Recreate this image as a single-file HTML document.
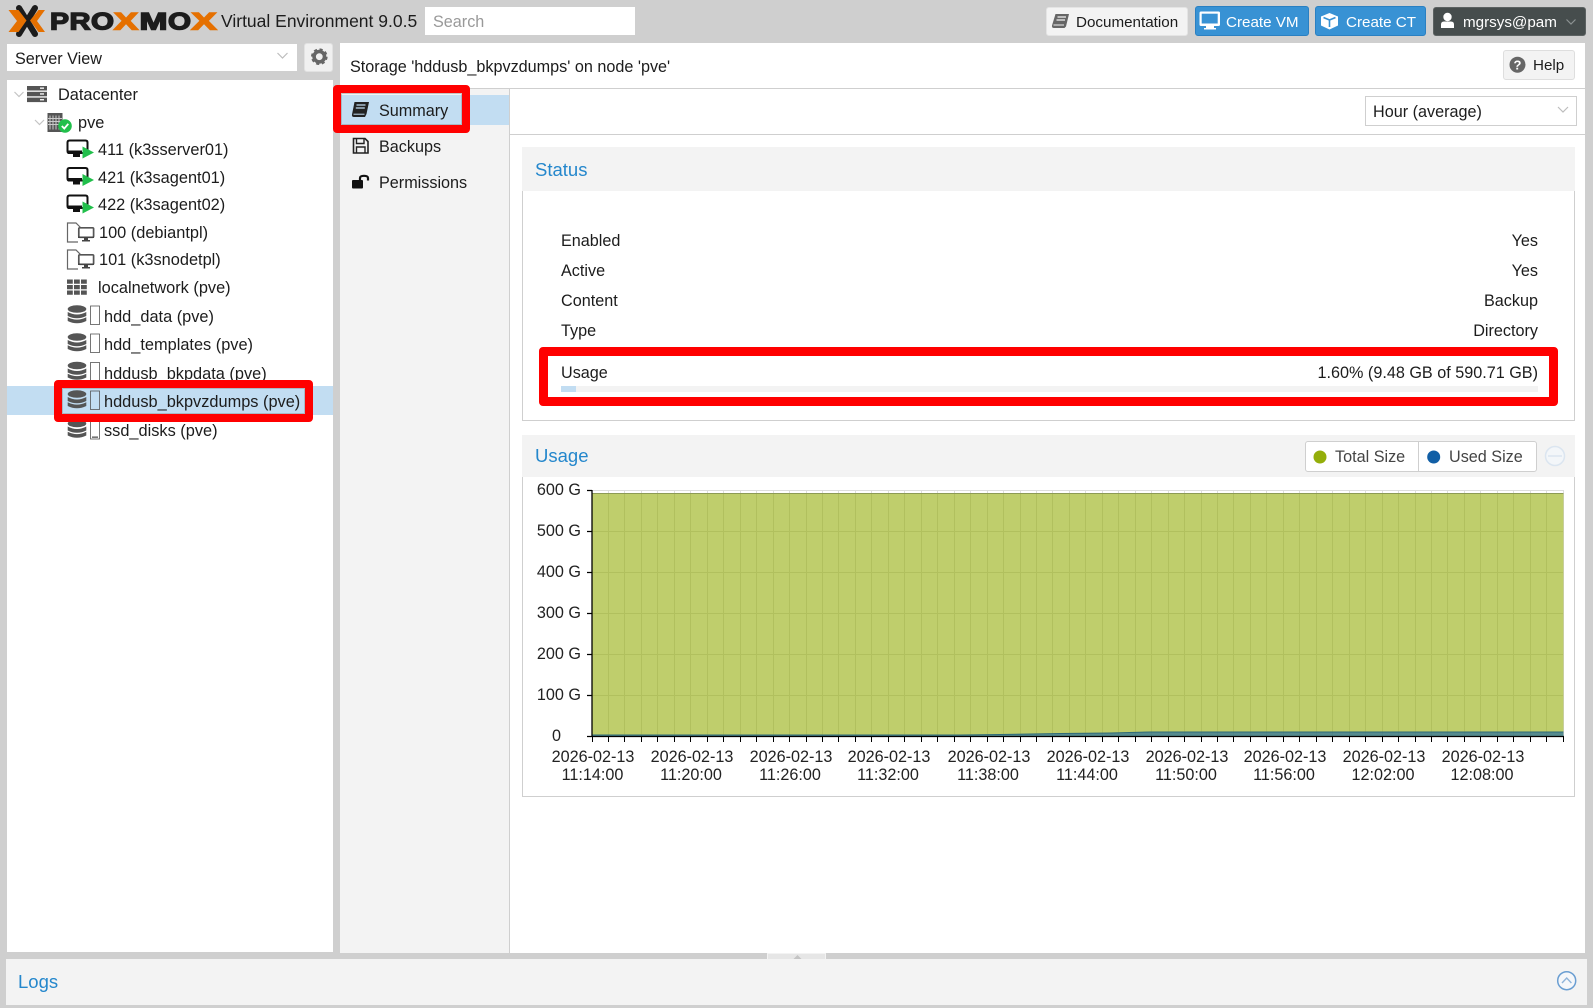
<!DOCTYPE html>
<html><head><meta charset="utf-8"><style>
html,body{margin:0;padding:0}
body{width:1593px;height:1008px;overflow:hidden;position:relative;background:#cfcfcf;font:16.2px/20px "Liberation Sans",sans-serif;color:#1c1c1c}
.a,.t{position:absolute}
.t{white-space:nowrap;height:20px}
.w{color:#fff}
.k{font-size:15.2px}
.tr{font-size:16.35px}
.b{color:#2487cc;font-size:18.5px}
.red{position:absolute;box-sizing:border-box;border:8.5px solid #f00;border-radius:4px;box-shadow:inset 0 0 0 1px rgba(140,140,140,.45)}
svg{position:absolute;overflow:visible}
</style></head><body>

<svg style="left:0;top:0" width="225" height="42" viewBox="0 0 225 42">
<g stroke="#1c1c1c" stroke-width="6" stroke-linecap="round" fill="none"><path d="M19 8L35 34"/><path d="M35 8L19 34"/></g>
<g fill="#e57000"><path d="M8.500 10H18.500L26.500 20.500 18.500 32H8.500L17 21z"/><path d="M45 10H38.500L30 20.500 38.500 32H45L37 21z"/></g>
<g font-family="Liberation Sans" font-weight="700" font-size="24" stroke-width="1.400">
<text x="50" y="29.700" textLength="19" lengthAdjust="spacingAndGlyphs" fill="#1c1c1c" stroke="#1c1c1c">P</text>
<text x="69.500" y="29.700" textLength="21" lengthAdjust="spacingAndGlyphs" fill="#1c1c1c" stroke="#1c1c1c">R</text>
<text x="91" y="29.700" textLength="23" lengthAdjust="spacingAndGlyphs" fill="#1c1c1c" stroke="#1c1c1c">O</text>
<text x="114" y="29.700" textLength="24" lengthAdjust="spacingAndGlyphs" fill="#e57000" stroke="#e57000">X</text>
<text x="139.500" y="29.700" textLength="28" lengthAdjust="spacingAndGlyphs" fill="#1c1c1c" stroke="#1c1c1c">M</text>
<text x="168" y="29.700" textLength="23" lengthAdjust="spacingAndGlyphs" fill="#1c1c1c" stroke="#1c1c1c">O</text>
<text x="191.500" y="29.700" textLength="25" lengthAdjust="spacingAndGlyphs" fill="#e57000" stroke="#e57000">X</text>
</g></svg>
<div class="t" style="left:221px;top:11px;font-size:17.5px">Virtual Environment 9.0.5</div>
<div class="a" style="left:425px;top:7px;width:210px;height:28px;background:#fff"></div>
<div class="t" style="left:433px;top:12px;color:#999">Search</div>

<div class="a" style="left:1046px;top:7px;width:140px;height:27px;background:#f3f3f3;border:1px solid #e4e4e4;border-radius:3px"></div>
<div class="t k" style="left:1076px;top:12.500px">Documentation</div>
<div class="a" style="left:1195px;top:6px;width:112px;height:28px;background:#3892d4;border:1px solid #2a80c2;border-radius:3px"></div>
<div class="t w k" style="left:1226px;top:12.500px">Create VM</div>
<div class="a" style="left:1315px;top:6px;width:109px;height:28px;background:#3892d4;border:1px solid #2a80c2;border-radius:3px"></div>
<div class="t w k" style="left:1346px;top:12.500px">Create CT</div>
<div class="a" style="left:1433px;top:7px;width:151px;height:27px;background:#464d4d;border:1px solid #5c6262;border-radius:3px"></div>
<div class="t w k" style="left:1463px;top:12.500px">mgrsys@pam</div>

<svg style="left:0;top:0" width="1593" height="40" viewBox="0 0 1593 40">
<path d="M1055.500 14H1069L1066 26.500 1064.500 28H1054Q1051.500 28 1052 25.500z" fill="#666"/><path d="M1057.500 17H1066M1056.500 20H1065" stroke="#f3f3f3" stroke-width="1.300"/><path d="M1053.500 25H1064" stroke="#f3f3f3" stroke-width="1"/>
<path d="M1201 11.500H1218.500Q1220 11.500 1220 13V24.500Q1220 26 1218.500 26H1201Q1199.500 26 1199.500 24.500V13Q1199.500 11.500 1201 11.500z" fill="#fff"/><rect x="1201.700" y="13.700" width="16" height="9.800" fill="#3892d4"/><path d="M1206 26H1214V28H1216V29.500H1204V28H1206z" fill="#fff"/>
<path d="M1329.500 13L1338 16.500V25.500L1329.500 29.500 1321 25.500V16.500z" fill="#fff"/><path d="M1323.500 17.500L1329.500 20 1335.500 17.500M1329.500 20V27" stroke="#3892d4" stroke-width="1.600" fill="none"/>
<circle cx="1447.500" cy="17" r="4.200" fill="#fff"/><path d="M1441 28V24.500Q1441 21.500 1444 21.500H1451Q1454 21.500 1454 24.500V28z" fill="#fff"/>
<path d="M1566.500 19.500L1571 24 1575.500 19.500" fill="none" stroke="#8c9292" stroke-width="1.200"/>
</svg>

<div class="a" style="left:7px;top:44px;width:290px;height:27px;background:#fff"></div>
<div class="t" style="left:15px;top:48.500px">Server View</div>
<svg style="left:0;top:40px" width="340" height="35" viewBox="0 40 340 35"><path d="M277.500 53L282.500 58 287.500 53" fill="none" stroke="#bdbdbd" stroke-width="1.200"/></svg>
<div class="a" style="left:304px;top:43px;background:#f0f0f0;border:1px solid #e2e2e2;border-radius:3px;width:27px;height:27px"></div>
<svg style="left:309px;top:47px" width="20" height="20" viewBox="0 0 20 20"><circle cx="10.300" cy="9.700" r="5.200" fill="none" stroke="#666" stroke-width="3.600"/><circle cx="10.300" cy="9.700" r="7" fill="none" stroke="#666" stroke-width="2.600" stroke-dasharray="3 2.500"/></svg>

<div class="a" style="left:7px;top:80px;width:326px;height:872px;background:#fff"></div>
<div class="a" style="left:7px;top:386px;width:326px;height:29px;background:#c2ddf2"></div>
<div class="a" style="left:340px;top:43px;width:1245px;height:910px;background:#fff"></div>
<div class="a" style="left:340px;top:88px;width:1245px;height:1px;background:#cfcfcf"></div>
<div class="a" style="left:340px;top:89px;width:169px;height:864px;background:#f3f3f3;border-right:1px solid #cfcfcf"></div>
<div class="a" style="left:510px;top:134px;width:1075px;height:1px;background:#cfcfcf"></div>
<div class="a" style="left:341px;top:95px;width:168px;height:30px;background:#c2ddf2"></div>

<svg style="left:0;top:0" width="340" height="450" viewBox="0 0 340 450">
<g fill="none" stroke="#c4c4c4" stroke-width="1.200"><path d="M14.500 92L19 96.500 23.500 92"/><path d="M35 120L39.500 124.500 44 120"/></g>
<g fill="#555"><rect x="27" y="86" width="20" height="4.500"/><rect x="27" y="91.800" width="20" height="4.500"/><rect x="27" y="97.600" width="20" height="4.500"/></g>
<g fill="#fff"><rect x="40" y="87.500" width="4" height="1.300"/><rect x="40" y="93.300" width="4" height="1.300"/><rect x="40" y="99.100" width="4" height="1.300"/></g>
<rect x="47.500" y="113" width="15" height="19" fill="#555"/><path d="M50 115.500v14M53 115.500v14M56 115.500v14M59 115.500v14M48 118.500h14M48 121.500h14M48 124.500h14" stroke="#c9c9c9" stroke-width="1"/>
<circle cx="65" cy="126" r="6.800" fill="#21bf4b"/><path d="M61.800 126L64.300 128.500 68.300 123.800" fill="none" stroke="#fff" stroke-width="1.800"/>

<path d="M69.500 140.500H85.500Q87.500 140.500 87.500 142.500V153H69.500Q67.500 153 67.500 151V142.500Q67.500 140.500 69.500 140.500z" fill="none" stroke="#111" stroke-width="2"/><path d="M67 150.500H82V154H80V157H73V154H69Q67 154 67 152z" fill="#111"/><path d="M82.500 146.500V158.500L94 152.500z" fill="#21bf4b"/>
<path d="M69.500 168H85.500Q87.500 168 87.500 170V180.500H69.500Q67.500 180.500 67.500 178.500V170Q67.500 168 69.500 168z" fill="none" stroke="#111" stroke-width="2"/><path d="M67 178H82V181.500H80V184.500H73V181.500H69Q67 181.500 67 179.500z" fill="#111"/><path d="M82.500 174V186L94 180z" fill="#21bf4b"/>
<path d="M69.500 195.500H85.500Q87.500 195.500 87.500 197.500V208H69.500Q67.500 208 67.500 206V197.500Q67.500 195.500 69.500 195.500z" fill="none" stroke="#111" stroke-width="2"/><path d="M67 205.500H82V209H80V212H73V209H69Q67 209 67 207z" fill="#111"/><path d="M82.500 201.500V213.500L94 207.500z" fill="#21bf4b"/>
<path d="M78 242H67.500V223H76L82 229" fill="none" stroke="#666" stroke-width="1.200"/><rect x="78.800" y="227.800" width="14.800" height="9.500" rx="1" fill="#fff" stroke="#555" stroke-width="1.700"/><path d="M78 236.500H94V238H88V240H90V241.500H82V240H84V238H78z" fill="#444"/>
<path d="M78 269H67.500V250H76L82 256" fill="none" stroke="#666" stroke-width="1.200"/><rect x="78.800" y="254.800" width="14.800" height="9.500" rx="1" fill="#fff" stroke="#555" stroke-width="1.700"/><path d="M78 263.500H94V265H88V267H90V268.500H82V267H84V265H78z" fill="#444"/>
<path d="M67 279.500h5.800v4.300h-5.800zM74 279.500h5.800v4.300h-5.800zM81 279.500h5.800v4.300h-5.800zM67 285h5.800v4.300h-5.800zM74 285h5.800v4.300h-5.800zM81 285h5.800v4.300h-5.800zM67 290.500h5.800v4.300h-5.800zM74 290.500h5.800v4.300h-5.800zM81 290.500h5.800v4.300h-5.800z" fill="#555"/>

<g fill="#555">
<ellipse cx="77" cy="309" rx="9.300" ry="3.800"/><path d="M67.700 312Q77 317 86.300 312V316Q77 320.500 67.700 316z"/><path d="M67.700 317.300Q77 322 86.300 317.300V321Q77 325.500 67.700 321z"/>
<ellipse cx="77" cy="337" rx="9.300" ry="3.800"/><path d="M67.700 340Q77 345 86.300 340V344Q77 348.500 67.700 344z"/><path d="M67.700 345.300Q77 350 86.300 345.300V349Q77 353.500 67.700 349z"/>
<ellipse cx="77" cy="365.500" rx="9.300" ry="3.800"/><path d="M67.700 368.500Q77 373.500 86.300 368.500V372.500Q77 377 67.700 372.500z"/><path d="M67.700 373.800Q77 378.500 86.300 373.800V377.500Q77 382 67.700 377.500z"/>
<ellipse cx="77" cy="394" rx="9.300" ry="3.800"/><path d="M67.700 397Q77 402 86.300 397V401Q77 405.500 67.700 401z"/><path d="M67.700 402.300Q77 407 86.300 402.300V406Q77 410.500 67.700 406z"/>
<ellipse cx="77" cy="423.500" rx="9.300" ry="3.800"/><path d="M67.700 426.500Q77 431.500 86.300 426.500V430.500Q77 435 67.700 430.500z"/><path d="M67.700 431.800Q77 436.500 86.300 431.800V435.500Q77 440 67.700 435.500z"/>
</g>
<g fill="none" stroke="#555" stroke-width=".8">
<rect x="90.500" y="306" width="9" height="18.500"/><rect x="90.500" y="334" width="9" height="18.500"/><rect x="90.500" y="362.500" width="9" height="18.500"/><rect x="90.500" y="391" width="9" height="18.500"/><rect x="90.500" y="420.500" width="9" height="18.500"/>
</g>
<rect x="92" y="436.500" width="6" height="1.300" fill="#555"/>

<path d="M354.500 102H369L366.500 114 365 117H354Q351.500 117 352 114.500z" fill="#222"/><path d="M356.500 105H365.500M355.800 108H364.800" stroke="#c2ddf2" stroke-width="1.200"/><path d="M353.500 114.200H364.500" stroke="#c2ddf2" stroke-width="1"/>
<path d="M353.500 138.500H365L368 141.500V153H353.500z" fill="none" stroke="#222" stroke-width="1.600"/><path d="M356.500 139V143.500H364V139M356.500 153V147H365V153" fill="none" stroke="#222" stroke-width="1.400"/>
<rect x="352" y="180" width="11" height="8.500" rx="1" fill="#111"/><path d="M360 180V178Q360 175.800 364 175.800Q368 175.800 368 178V180.500" fill="none" stroke="#111" stroke-width="2.200"/>
</svg>

<div class="t tr" style="left:58px;top:85px">Datacenter</div>
<div class="t tr" style="left:78px;top:113px">pve</div>
<div class="t tr" style="left:98px;top:140px">411 (k3sserver01)</div>
<div class="t tr" style="left:98px;top:168px">421 (k3sagent01)</div>
<div class="t tr" style="left:98px;top:195px">422 (k3sagent02)</div>
<div class="t tr" style="left:99px;top:223px">100 (debiantpl)</div>
<div class="t tr" style="left:99px;top:250px">101 (k3snodetpl)</div>
<div class="t tr" style="left:98px;top:278px">localnetwork (pve)</div>
<div class="t tr" style="left:104px;top:307px">hdd_data (pve)</div>
<div class="t tr" style="left:104px;top:335px">hdd_templates (pve)</div>
<div class="t tr" style="left:104px;top:364px">hddusb_bkpdata (pve)</div>
<div class="t tr" style="left:104px;top:392px">hddusb_bkpvzdumps (pve)</div>
<div class="t tr" style="left:104px;top:421px">ssd_disks (pve)</div>

<div class="t" style="left:350px;top:57px">Storage 'hddusb_bkpvzdumps' on node 'pve'</div>
<div class="a" style="left:1503px;top:50px;width:70px;height:28px;background:#f3f3f3;border:1px solid #dedede;border-radius:3px"></div>
<svg style="left:1508px;top:55px" width="20" height="20" viewBox="0 0 20 20"><circle cx="9.500" cy="9.700" r="8" fill="#666"/><text x="9.500" y="14.500" text-anchor="middle" font-family="Liberation Sans" font-weight="700" font-size="13" fill="#fff">?</text></svg>
<div class="t k" style="left:1533px;top:56px">Help</div>

<div class="t" style="left:379px;top:101px">Summary</div>
<div class="t" style="left:379px;top:137px">Backups</div>
<div class="t" style="left:379px;top:173px">Permissions</div>

<div class="a" style="left:1365px;top:96px;width:210px;height:28px;background:#fff;border:1px solid #cfcfcf"></div>
<div class="t" style="left:1373px;top:102px">Hour (average)</div>
<svg style="left:1550px;top:100px" width="25" height="20" viewBox="0 0 25 20"><path d="M8 7L13 12 18 7" fill="none" stroke="#bdbdbd" stroke-width="1.200"/></svg>

<div class="a" style="left:522px;top:147px;width:1053px;height:44px;background:#f3f3f3"></div>
<div class="t b" style="left:535px;top:160px">Status</div>
<div class="a" style="left:522px;top:191px;width:1051px;height:229px;background:#fff;border:1px solid #cfcfcf;border-top:0"></div>
<div class="t" style="left:561px;top:231px">Enabled</div><div class="t" style="right:55px;top:231px">Yes</div>
<div class="t" style="left:561px;top:261px">Active</div><div class="t" style="right:55px;top:261px">Yes</div>
<div class="t" style="left:561px;top:291px">Content</div><div class="t" style="right:55px;top:291px">Backup</div>
<div class="t" style="left:561px;top:321px">Type</div><div class="t" style="right:55px;top:321px">Directory</div>
<div class="t" style="left:561px;top:363px">Usage</div><div class="t" style="right:55px;top:363px">1.60% (9.48 GB of 590.71 GB)</div>
<div class="a" style="left:561px;top:386px;width:977px;height:6px;background:#f3f3f3"></div>
<div class="a" style="left:561px;top:386px;width:15px;height:6px;background:#c2ddf2"></div>

<div class="a" style="left:522px;top:435px;width:1053px;height:42px;background:#f3f3f3"></div>
<div class="t b" style="left:535px;top:446px">Usage</div>
<div class="a" style="left:1305px;top:441px;width:230px;height:29px;background:#fff;border:1px solid #cfcfcf;border-radius:3px"></div>
<div class="a" style="left:1418px;top:442px;width:1px;height:29px;background:#cfcfcf"></div>
<svg style="left:1300px;top:440px" width="275" height="35" viewBox="1300 440 275 35"><circle cx="1320" cy="457" r="6.500" fill="#94ae0a"/><circle cx="1433.700" cy="457" r="6.500" fill="#115fa6"/><circle cx="1555" cy="456" r="9.500" fill="#f3f6f9" stroke="#dbe5f0" stroke-width="1.500"/><path d="M1548 456H1562" stroke="#dbe5f0" stroke-width="1.500"/></svg>
<div class="t" style="left:1335px;top:447px;color:#444">Total Size</div>
<div class="t" style="left:1449px;top:447px;color:#444">Used Size</div>

<div class="a" style="left:522px;top:477px;width:1051px;height:319px;background:#fff;border:1px solid #cfcfcf;border-top:0"></div>
<svg style="left:0;top:0" width="1593" height="800" viewBox="0 0 1593 800" font-family="Liberation Sans" font-size="16.200" fill="#222">
<path fill="none" stroke="#ddd" stroke-width="1" d="M592 490.500H1563.500M592 531.500H1563M592 572.500H1563M592 613.500H1563M592 654.500H1563M592 695.500H1563M608.500 490V736M624.500 490V736M641.500 490V736M657.500 490V736M674.500 490V736M690.500 490V736M707.500 490V736M723.500 490V736M740.500 490V736M756.500 490V736M773.500 490V736M789.500 490V736M806.500 490V736M822.500 490V736M838.500 490V736M855.500 490V736M871.500 490V736M888.500 490V736M904.500 490V736M921.500 490V736M937.500 490V736M954.500 490V736M970.500 490V736M987.500 490V736M1003.500 490V736M1020.500 490V736M1036.500 490V736M1052.500 490V736M1069.500 490V736M1085.500 490V736M1102.500 490V736M1118.500 490V736M1135.500 490V736M1151.500 490V736M1168.500 490V736M1184.500 490V736M1201.500 490V736M1217.500 490V736M1233.500 490V736M1250.500 490V736M1266.500 490V736M1283.500 490V736M1299.500 490V736M1316.500 490V736M1332.500 490V736M1349.500 490V736M1365.500 490V736M1382.500 490V736M1398.500 490V736M1415.500 490V736M1431.500 490V736M1447.500 490V736M1464.500 490V736M1480.500 490V736M1497.500 490V736M1513.500 490V736M1530.500 490V736M1546.500 490V736M1563.500 490V736"/>
<rect x="592" y="493" width="971.500" height="243" fill="#94ae0a" fill-opacity=".6"/>
<path d="M592 493.500H1563.500" stroke="#8d9b55" stroke-width="1"/>
<path d="M592 735H960L1000 734.500 1060 733.500 1110 733 1150 732H1563.500V736H592z" fill="#115fa6" fill-opacity=".6"/>
<path d="M592 735H960L1000 734.500 1060 733.500 1110 733 1150 732H1563.500" fill="none" stroke="#2f6b78" stroke-width="1"/>
<path fill="none" stroke="#000" stroke-width="1.300" d="M592 490V737M587 490.500H592M587 531.500H592M587 572.500H592M587 613.500H592M587 654.500H592M587 695.500H592M587 736.500H1564"/>
<path fill="none" stroke="#000" stroke-width="1" d="M592.500 736V742M608.500 736V742M624.500 736V742M641.500 736V742M657.500 736V742M674.500 736V742M690.500 736V742M707.500 736V742M723.500 736V742M740.500 736V742M756.500 736V742M773.500 736V742M789.500 736V742M806.500 736V742M822.500 736V742M838.500 736V742M855.500 736V742M871.500 736V742M888.500 736V742M904.500 736V742M921.500 736V742M937.500 736V742M954.500 736V742M970.500 736V742M987.500 736V742M1003.500 736V742M1020.500 736V742M1036.500 736V742M1052.500 736V742M1069.500 736V742M1085.500 736V742M1102.500 736V742M1118.500 736V742M1135.500 736V742M1151.500 736V742M1168.500 736V742M1184.500 736V742M1201.500 736V742M1217.500 736V742M1233.500 736V742M1250.500 736V742M1266.500 736V742M1283.500 736V742M1299.500 736V742M1316.500 736V742M1332.500 736V742M1349.500 736V742M1365.500 736V742M1382.500 736V742M1398.500 736V742M1415.500 736V742M1431.500 736V742M1447.500 736V742M1464.500 736V742M1480.500 736V742M1497.500 736V742M1513.500 736V742M1530.500 736V742M1546.500 736V742M1563.500 736V742"/>
<g text-anchor="end"><text x="581" y="495">600 G</text><text x="581" y="536">500 G</text><text x="581" y="577">400 G</text><text x="581" y="618">300 G</text><text x="581" y="659">200 G</text><text x="581" y="700">100 G</text><text x="561" y="741">0</text></g>
<g text-anchor="middle">
<text x="593" y="762">2026-02-13</text><text x="592.500" y="780">11:14:00</text>
<text x="692" y="762">2026-02-13</text><text x="691" y="780">11:20:00</text>
<text x="791" y="762">2026-02-13</text><text x="790" y="780">11:26:00</text>
<text x="889" y="762">2026-02-13</text><text x="888" y="780">11:32:00</text>
<text x="989" y="762">2026-02-13</text><text x="988" y="780">11:38:00</text>
<text x="1088" y="762">2026-02-13</text><text x="1087" y="780">11:44:00</text>
<text x="1187" y="762">2026-02-13</text><text x="1186" y="780">11:50:00</text>
<text x="1285" y="762">2026-02-13</text><text x="1284" y="780">11:56:00</text>
<text x="1384" y="762">2026-02-13</text><text x="1383" y="780">12:02:00</text>
<text x="1483" y="762">2026-02-13</text><text x="1482" y="780">12:08:00</text>
</g>
</svg>

<div class="red" style="left:54px;top:380px;width:259px;height:42px"></div>
<div class="red" style="left:333px;top:85px;width:137px;height:48px"></div>
<div class="red" style="left:539px;top:347px;width:1019px;height:59px;border-width:9px;box-shadow:none"></div>

<div class="a" style="left:767px;top:953px;width:59px;height:6px;background:#e6e6e6;box-shadow:inset 1px 1px 0 #f3f3f3,inset -1px 0 0 #f3f3f3"></div>
<svg style="left:790px;top:953px" width="14" height="6" viewBox="0 0 14 6"><path d="M3.500 6L7.500 2 11.500 6z" fill="#c4c4c4"/></svg>
<div class="a" style="left:6px;top:959px;width:1581px;height:46px;background:#f3f3f3"></div>
<div class="t b" style="left:18px;top:972px">Logs</div>
<svg style="left:1555px;top:969px" width="24" height="24" viewBox="0 0 24 24"><circle cx="11.700" cy="11.700" r="9" fill="#f5f7fa" stroke="#6a9ed2" stroke-width="1.500"/><path d="M7 14L11.700 9 16.400 14" fill="none" stroke="#8fb4da" stroke-width="1.400"/></svg>

</body></html>
